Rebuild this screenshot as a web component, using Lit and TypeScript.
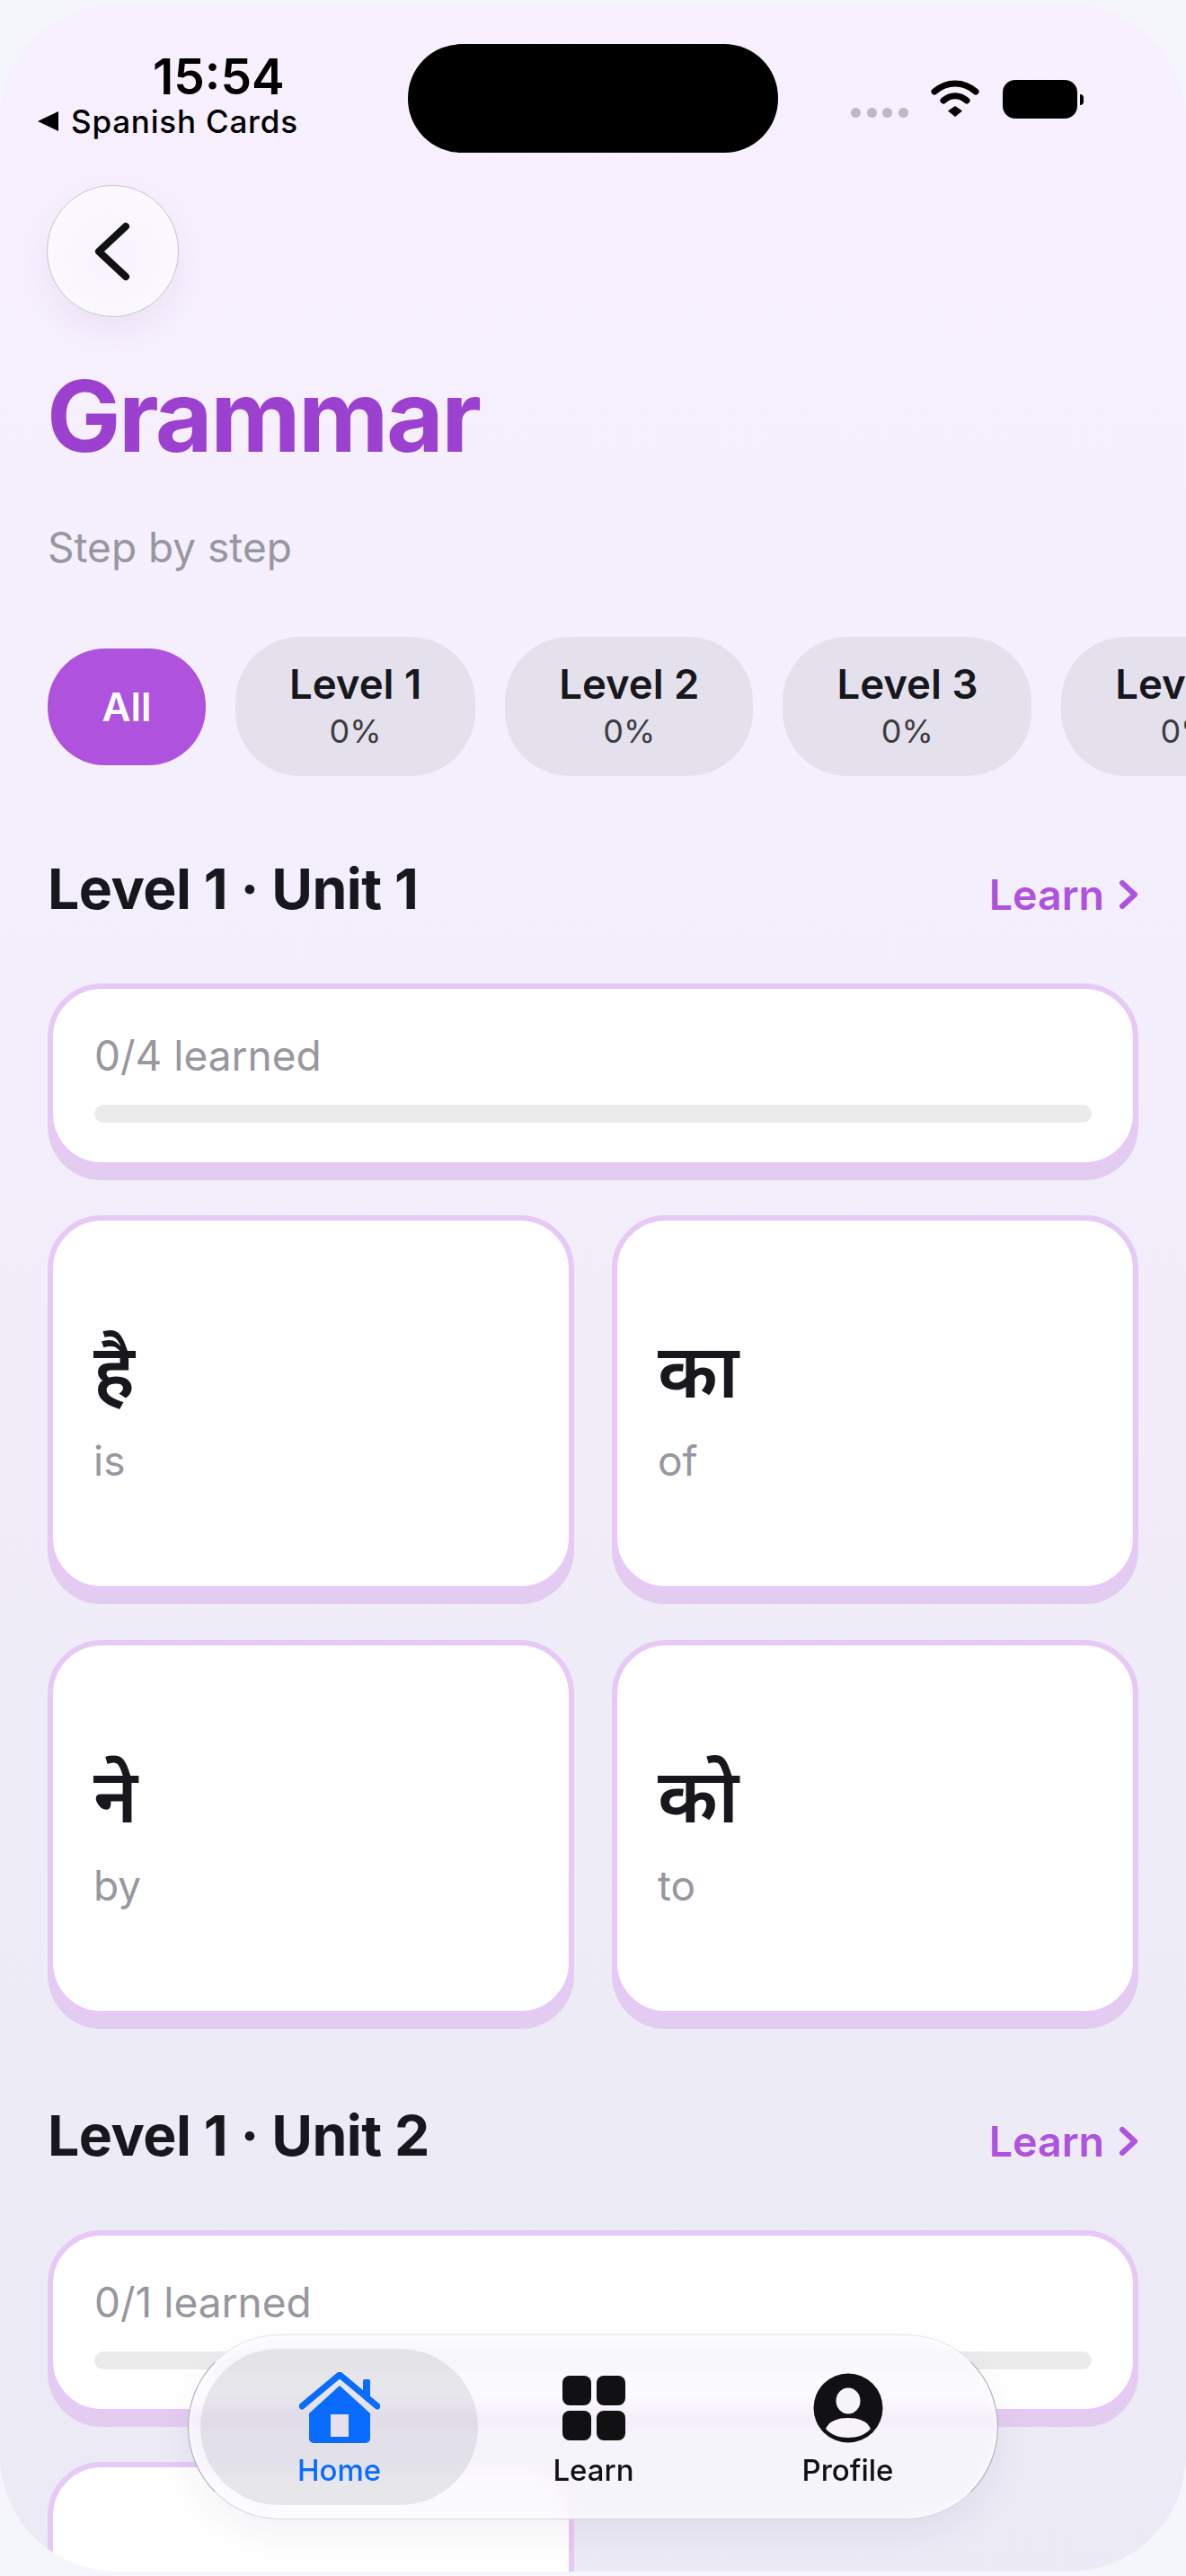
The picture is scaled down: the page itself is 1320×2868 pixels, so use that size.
import { LitElement, html, css, svg } from 'lit';
import { customElement } from 'lit/decorators.js';

const levels = [
  { name: 'Level 1', pct: '0%' },
  { name: 'Level 2', pct: '0%' },
  { name: 'Level 3', pct: '0%' },
  { name: 'Level 4', pct: '0%' },
];

const unit1 = [
  { word: 'है', gloss: 'is' },
  { word: 'का', gloss: 'of' },
  { word: 'ने', gloss: 'by' },
  { word: 'को', gloss: 'to' },
];

const homeIcon = svg`<svg class="tab__icon" width="90" height="80" viewBox="0 0 90 80">
  <rect x="71" y="8" width="8" height="22" rx="2" fill="#0a6cff"/>
  <path d="M45 15 79 46V74a5 5 0 0 1-5 5H16a5 5 0 0 1-5-5V46Z" fill="#0a6cff"/>
  <polyline points="3,38 45,3 87,38" fill="none" stroke="#0a6cff" stroke-width="7" stroke-linecap="round" stroke-linejoin="round"/>
  <rect x="35" y="47" width="20" height="25" fill="#e5e0ec"/>
</svg>`;

const gridIcon = svg`<svg class="tab__icon" width="70" height="72" viewBox="0 0 70 72" fill="#111114">
  <rect x="0" y="0" width="32" height="33" rx="8"/>
  <rect x="38" y="0" width="32" height="33" rx="8"/>
  <rect x="0" y="39" width="32" height="33" rx="8"/>
  <rect x="38" y="39" width="32" height="33" rx="8"/>
</svg>`;

const profileIcon = svg`<svg class="tab__icon" width="78" height="78" viewBox="0 0 78 78">
  <circle cx="39" cy="39" r="38.5" fill="#111114"/>
  <ellipse cx="39" cy="31" rx="13.5" ry="14.5" fill="#f6f3fb"/>
  <path d="M14 62C18 53 28 50 39 50s21 3 25 12C58 69 49 72 39 72S20 69 14 62Z" fill="#f6f3fb"/>
</svg>`;

@customElement('app-root')
export default class App extends LitElement {
  static override styles = css`
    :host {
      display: block;
      height: 2868px;
      padding-top: 5px;
      box-sizing: border-box;
      background: #f4f6fb;
      font-family: Inter, 'Noto Sans', 'Liberation Sans', sans-serif;
      color: #17171d;
    }
    .screen {
      position: relative;
      height: 2858px;
      overflow: hidden;
      border-radius: 130px;
      background: linear-gradient(180deg, #f8efff 0%, #f4effd 30%, #eeecf6 70%, #ebeaf5 100%);
    }
    .status {
      display: flex;
      align-items: flex-start;
      height: 201px;
      padding: 44px 0 0 42px;
      box-sizing: border-box;
    }
    .status__left {
      width: 412px;
      color: #000;
      padding-top: 6px;
      box-sizing: border-box;
    }
    .status__time {
      padding-left: 128px;
      font-size: 55px;
      line-height: 60px;
      font-weight: 600;
    }
    .status__app {
      display: flex;
      align-items: center;
      gap: 14px;
      font-size: 35px;
      line-height: 40px;
      font-weight: 500;
      letter-spacing: 0.8px;
    }
    .status__tri {
      width: 0;
      height: 0;
      border-style: solid;
      border-width: 11px 23px 11px 0;
      border-color: transparent #000 transparent transparent;
    }
    .status__island {
      width: 412px;
      height: 121px;
      border-radius: 60px;
      background: #000;
      flex: none;
    }
    .status__dots {
      display: flex;
      gap: 6.5px;
      margin: 71px 0 0 81px;
    }
    .status__dots i {
      width: 11px;
      height: 11px;
      border-radius: 50%;
      background: #bdb8c4;
    }
    .status__wifi {
      margin: 40px 0 0 25px;
    }
    .status__batt {
      display: flex;
      align-items: center;
      gap: 3px;
      margin: 40px 0 0 26px;
    }
    .status__batt b {
      display: block;
      width: 83px;
      height: 43px;
      border-radius: 14px;
      background: #000;
    }
    .status__batt i {
      display: block;
      width: 4px;
      height: 12px;
      border-radius: 0 6px 6px 0;
      background: #000;
    }
    .content {
      padding: 0 53px;
    }
    .back {
      width: 147px;
      height: 147px;
      box-sizing: border-box;
      display: grid;
      place-items: center;
      border-radius: 50%;
      border: 1.5px solid #c9c2d1;
      background: radial-gradient(circle at 50% 55%, #f8f3fe 0%, #fbf8fe 70%, #fff 100%);
      box-shadow: 0 14px 34px rgba(60, 40, 90, 0.06);
      margin-left: -1px;
    }
    .title {
      margin: 45px 0 0 -1px;
      font-size: 110px;
      line-height: 130px;
      font-weight: 700;
      letter-spacing: -2.5px;
      color: #9b40cf;
    }
    .sub {
      margin-top: 54px;
      font-size: 46px;
      line-height: 54px;
      color: #98969f;
    }
    .chips {
      display: flex;
      align-items: center;
      gap: 33px;
      margin: 73px -53px 0 0;
      overflow: hidden;
    }
    .chip {
      flex: none;
      box-sizing: border-box;
      height: 155px;
      padding: 28px 60px 0;
      border-radius: 72px;
      background: #e5e1ec;
      text-align: center;
    }
    .chip__name {
      font-size: 45.5px;
      line-height: 50px;
      font-weight: 600;
    }
    .chip__pct {
      margin-top: 6px;
      font-size: 36px;
      line-height: 42px;
      color: #3c3c43;
    }
    .chip--all {
      width: 176px;
      height: 130px;
      padding: 0;
      display: grid;
      place-items: center;
      border-radius: 64px;
      background: #af52de;
      color: #fff;
      font-size: 44px;
      font-weight: 600;
    }
    .unit__head {
      display: flex;
      justify-content: space-between;
      align-items: center;
      margin-top: 87px;
    }
    .unit__title {
      margin: 0;
      font-size: 62.5px;
      line-height: 76px;
      font-weight: 700;
      letter-spacing: -0.5px;
    }
    .unit__learn {
      display: flex;
      align-items: center;
      gap: 16px;
      margin-top: 14px;
      font-size: 46.5px;
      font-weight: 600;
      color: #af52de;
    }
    .card {
      box-sizing: border-box;
      border: 6.5px solid #e6c9f5;
      border-radius: 60px;
      background: #fff;
      box-shadow: 0 14px 0 #e2cdf0;
    }
    .progress {
      height: 205px;
      margin-top: 68px;
      padding: 46px 46px 0;
    }
    .progress__label {
      font-size: 46px;
      line-height: 56px;
      color: #98969f;
    }
    .progress__bar {
      height: 20px;
      margin-top: 27px;
      border-radius: 10px;
      background: #ebebeb;
    }
    .words {
      display: grid;
      grid-template-columns: 1fr 1fr;
      gap: 54px 42px;
      margin-top: 53px;
      padding-bottom: 7px;
    }
    .word {
      height: 419px;
      display: flex;
      flex-direction: column;
      justify-content: center;
      padding: 0 45px;
    }
    .word__text {
      font-size: 83px;
      line-height: 110px;
      font-weight: 600;
    }
    .word__gloss {
      margin-top: 17px;
      font-size: 46px;
      line-height: 56px;
      color: #98969f;
    }
    .tabs {
      position: absolute;
      left: 209px;
      top: 2594px;
      width: 902px;
      height: 206px;
      box-sizing: border-box;
      padding: 15px 0 15px 26px;
      display: grid;
      grid-template-columns: repeat(3, 283px);
      border: 1.5px solid;
      border-color: #e6e4ea #a9a5ae #d9d7dd #a9a5ae;
      border-radius: 103px;
      background: rgba(250, 248, 254, 0.72);
      backdrop-filter: blur(10px);
      box-shadow: 0 18px 40px rgba(60, 40, 90, 0.06), inset 0 0 10px rgba(255, 255, 255, 0.8);
    }
    .tab {
      position: relative;
      display: flex;
      flex-direction: column;
      align-items: center;
      font-size: 33px;
      line-height: 40px;
      font-weight: 500;
      color: #111114;
      padding-top: 26px;
    }
    .tab__icon {
      position: relative;
      display: block;
      height: 80px;
      margin-bottom: 9px;
    }
    .tab__label {
      position: relative;
    }
    .tab--on {
      color: #0a6cff;
    }
    .tab--on::before {
      content: '';
      position: absolute;
      inset: 0 -13px 0 -13px;
      border-radius: 88px;
      background: rgba(60, 60, 67, 0.1);
    }
  `;

  private renderUnit(title: string, learned: string, words: { word: string; gloss: string }[]) {
    return html`
      <div class="unit__head">
        <h2 class="unit__title">${title}</h2>
        <div class="unit__learn">
          Learn
          <svg width="22" height="34" viewBox="0 0 22 34" fill="none" stroke="#af52de" stroke-width="6" stroke-linecap="round" stroke-linejoin="round">
            <polyline points="4,4 18,17 4,30"></polyline>
          </svg>
        </div>
      </div>
      <div class="card progress">
        <div class="progress__label">${learned}</div>
        <div class="progress__bar"></div>
      </div>
      <div class="words">
        ${words.map(
          (w) => html`
            <div class="card word">
              <div class="word__text">${w.word}</div>
              <div class="word__gloss">${w.gloss}</div>
            </div>
          `
        )}
      </div>
    `;
  }

  override render() {
    return html`
      <div class="screen">
        <div class="status">
          <div class="status__left">
            <div class="status__time">15:54</div>
            <div class="status__app"><span class="status__tri"></span>Spanish Cards</div>
          </div>
          <div class="status__island"></div>
          <div class="status__dots"><i></i><i></i><i></i><i></i></div>
          <svg class="status__wifi" width="54" height="42" viewBox="0 0 54 42" fill="none" stroke="#000" stroke-linecap="round">
            <path d="M4 13C18 1 36 1 50 13" stroke-width="7"></path>
            <path d="M14 23C22 16 32 16 40 23" stroke-width="7"></path>
            <path d="M27 29 35 34.5 27 41 19 34.5Z" fill="#000" stroke="none"></path>
          </svg>
          <div class="status__batt"><b></b><i></i></div>
        </div>
        <div class="content">
          <div class="back">
            <svg width="44" height="66" viewBox="0 0 44 66" fill="none" stroke="#111114" stroke-width="8" stroke-linecap="round" stroke-linejoin="round">
              <polyline points="36,5 6,33 36,61"></polyline>
            </svg>
          </div>
          <h1 class="title">Grammar</h1>
          <div class="sub">Step by step</div>
          <div class="chips">
            <div class="chip chip--all">All</div>
            ${levels.map(
              (l) => html`
                <div class="chip">
                  <div class="chip__name">${l.name}</div>
                  <div class="chip__pct">${l.pct}</div>
                </div>
              `
            )}
          </div>
          ${this.renderUnit('Level 1 · Unit 1', '0/4 learned', unit1)}
          ${this.renderUnit('Level 1 · Unit 2', '0/1 learned', [{ word: 'में', gloss: 'in' }])}
        </div>
        <div class="tabs">
          <div class="tab tab--on">${homeIcon}<span class="tab__label">Home</span></div>
          <div class="tab">${gridIcon}<span class="tab__label">Learn</span></div>
          <div class="tab">${profileIcon}<span class="tab__label">Profile</span></div>
        </div>
      </div>
    `;
  }
}
